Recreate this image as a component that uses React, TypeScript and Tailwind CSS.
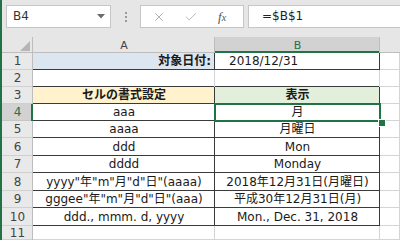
import React from 'react';
import { X, Check } from 'lucide-react';

type Kind = 'r1' | 'r2' | 'head' | 'data' | 'plain';
type Row = { n: number; h: string; kind: Kind; a?: string; b?: string };

const rows: Row[] = [
  { n: 1, h: 'h-[17px]', kind: 'r1', a: '対象日付:', b: '2018/12/31' },
  { n: 2, h: 'h-[17px]', kind: 'r2' },
  { n: 3, h: 'h-[17px]', kind: 'head', a: 'セルの書式設定', b: '表示' },
  { n: 4, h: 'h-[17px]', kind: 'data', a: 'aaa', b: '月' },
  { n: 5, h: 'h-[17px]', kind: 'data', a: 'aaaa', b: '月曜日' },
  { n: 6, h: 'h-[18px]', kind: 'data', a: 'ddd', b: 'Mon' },
  { n: 7, h: 'h-[17px]', kind: 'data', a: 'dddd', b: 'Monday' },
  { n: 8, h: 'h-[18px]', kind: 'data', a: 'yyyy"年"m"月"d"日"(aaaa)', b: '2018年12月31日(月曜日)' },
  { n: 9, h: 'h-[17px]', kind: 'data', a: 'gggee"年"m"月"d"日"(aaa)', b: '平成30年12月31日(月)' },
  { n: 10, h: 'h-[18px]', kind: 'data', a: 'ddd., mmm. d, yyyy', b: 'Mon., Dec. 31, 2018' },
  { n: 11, h: 'h-[14px]', kind: 'plain' },
];

function aClass(k: Kind): string {
  switch (k) {
    case 'r1':
      return 'bg-[#dce6f1] shadow-[inset_-1px_0_0_#3a3a3a,inset_0_-1px_0_#3a3a3a] justify-end pr-[4px] font-bold';
    case 'r2':
      return 'bg-white shadow-[inset_-1px_0_0_#d4d4d4,inset_0_-1px_0_#3a3a3a] justify-center';
    case 'head':
      return 'bg-[#fff2cc] shadow-[inset_-1px_0_0_#3a3a3a,inset_0_-1px_0_#3a3a3a] justify-center font-bold';
    case 'data':
      return 'bg-white shadow-[inset_-1px_0_0_#3a3a3a,inset_0_-1px_0_#3a3a3a] justify-center';
    default:
      return 'bg-white shadow-[inset_-1px_0_0_#d4d4d4,inset_0_-1px_0_#d4d4d4] justify-center';
  }
}

function bClass(k: Kind): string {
  switch (k) {
    case 'r1':
      return 'bg-white shadow-[inset_-1px_0_0_#3a3a3a,inset_0_-1px_0_#3a3a3a] justify-start pl-[14px]';
    case 'r2':
      return 'bg-white shadow-[inset_-1px_0_0_#d4d4d4,inset_0_-1px_0_#3a3a3a] justify-center';
    case 'head':
      return 'bg-[#e2efda] shadow-[inset_-1px_0_0_#3a3a3a,inset_0_-1px_0_#3a3a3a] justify-center font-bold';
    case 'data':
      return 'bg-white shadow-[inset_-1px_0_0_#3a3a3a,inset_0_-1px_0_#3a3a3a] justify-center';
    default:
      return 'bg-white shadow-[inset_-1px_0_0_#d4d4d4,inset_0_-1px_0_#d4d4d4] justify-center';
  }
}

export default function App() {
  return (
    <div className="w-[400px] h-[240px] overflow-hidden flex bg-white font-['DejaVu_Sans','Noto_Sans_CJK_JP',sans-serif] text-[12px] leading-[15px] text-[#1a1a1a]">
      <div className="w-[2px] shrink-0 bg-[#217346]" />
      <div className="flex-1 flex flex-col min-w-0">
        {/* formula bar */}
        <div className="h-[37px] shrink-0 bg-[#e6e6e6] flex items-start pt-[5px]">
          <div className="ml-[4px] w-[105px] h-[23px] bg-white shadow-[inset_0_0_0_1px_#c6c6c6] flex items-center justify-between pl-[7px] pr-[6px]">
            <span className="text-[12px] text-[#333]">B4</span>
            <svg width="8" height="5" viewBox="0 0 8 5">
              <polygon points="0,0 8,0 4,4.5" fill="#6b6b6b" />
            </svg>
          </div>
          <div className="w-[29px] h-[23px] flex flex-col items-center justify-center gap-[2px]">
            <div className="w-[2px] h-[2px] bg-[#9a9a9a]" />
            <div className="w-[2px] h-[2px] bg-[#9a9a9a]" />
            <div className="w-[2px] h-[2px] bg-[#9a9a9a]" />
          </div>
          <div className="w-[104px] h-[23px] bg-white shadow-[inset_0_0_0_1px_#c6c6c6] flex items-center pl-[12px]">
            <X size={14} strokeWidth={1.4} color="#9e9e9e" />
            <Check size={14} strokeWidth={1.4} color="#a8a8a8" className="ml-[18px]" />
            <span className="ml-[20px] italic font-['Liberation_Serif',serif] text-[13px] text-[#555] leading-none">
              f<span className="text-[10px]">x</span>
            </span>
          </div>
          <div className="ml-[4px] flex-1 h-[23px] bg-white shadow-[inset_1px_1px_0_#c6c6c6,inset_0_-1px_0_#c6c6c6] flex items-center pl-[14px]">
            <span className="text-[12px] text-[#222]">=$B$1</span>
          </div>
        </div>

        {/* column headers */}
        <div className="h-[16px] shrink-0 flex bg-[#e6e6e6]">
          <div className="w-[31px] shrink-0 shadow-[inset_-1px_-1px_0_#bdbdbd] flex items-end justify-end pr-[3px] pb-[2px]">
            <svg width="10" height="10" viewBox="0 0 10 10">
              <polygon points="10,0 10,10 0,10" fill="#b5b5b5" />
            </svg>
          </div>
          <div className="w-[182px] shrink-0 shadow-[inset_-1px_-1px_0_#bdbdbd] flex items-center justify-center text-[11px] text-[#444]">A</div>
          <div className="w-[165px] shrink-0 bg-[#d2d2d2] shadow-[inset_-1px_0_0_#bdbdbd,inset_0_-2px_0_#217346] flex items-center justify-center text-[11px] text-[#217346]">B</div>
          <div className="flex-1 shadow-[inset_0_-1px_0_#bdbdbd]" />
        </div>

        {/* rows */}
        {rows.map((r) => (
          <div key={r.n} className={`${r.h} shrink-0 flex overflow-visible`}>
            <div
              className={
                r.n === 4
                  ? 'w-[31px] shrink-0 bg-[#d2d2d2] shadow-[inset_-2px_0_0_#217346,inset_0_-1px_0_#c6c6c6] flex items-center justify-center text-[#217346]'
                  : 'w-[31px] shrink-0 bg-[#e9e9e9] shadow-[inset_-1px_0_0_#bdbdbd,inset_0_-1px_0_#d0d0d0] flex items-center justify-center text-[#444]'
              }
            >
              {r.n}
            </div>
            <div className={`w-[182px] shrink-0 flex items-center whitespace-nowrap ${aClass(r.kind)}`}>{r.a}</div>
            <div className={`w-[165px] shrink-0 relative flex items-center whitespace-nowrap ${bClass(r.kind)}`}>
              {r.b}
              {r.n === 4 && (
                <div className="absolute z-10 -left-px -top-px -right-px -bottom-px shadow-[inset_0_0_0_2px_#217346]">
                  <div className="absolute -right-[4px] -bottom-[4px] w-[6px] h-[6px] bg-[#217346] shadow-[0_0_0_1px_#ffffff]" />
                </div>
              )}
            </div>
            <div className="flex-1 bg-white shadow-[inset_-1px_-1px_0_#d4d4d4]" />
          </div>
        ))}
      </div>
    </div>
  );
}
